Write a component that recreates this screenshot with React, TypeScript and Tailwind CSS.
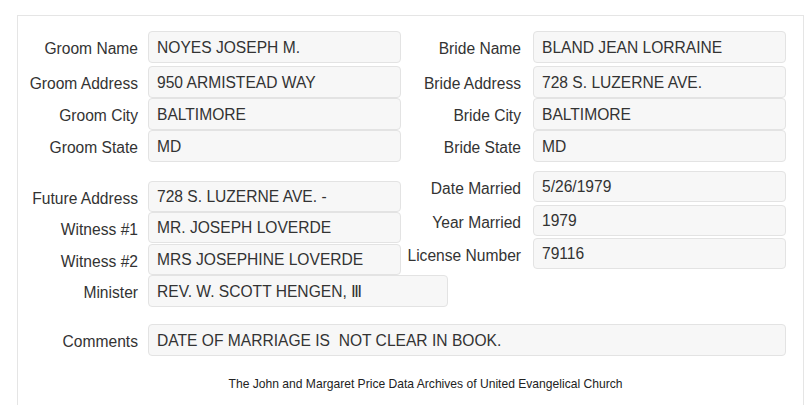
import React from "react";

type FieldProps = {
  label: string;
  value: string;
  cls: string;
  gapCls: string;
  inputW: string;
};

function Field({ label, value, cls, gapCls, inputW }: FieldProps) {
  return (
    <div className={`flex items-center ${cls}`}>
      <div className="w-[120px] shrink-0 text-right whitespace-nowrap text-[15.6px] leading-[18px] text-[#333] pt-[4px] flex justify-end">
        <span className="whitespace-nowrap">{label}</span>
      </div>
      <div
        className={`${gapCls} ${inputW} h-full shrink-0 rounded-[4px] border border-[#e3e3e3] bg-[#f7f7f7] pl-[8px] pt-[1px] flex items-center text-[15.6px] text-[#333] whitespace-pre`}
      >
        {value}
      </div>
    </div>
  );
}

export default function App() {
  return (
    <div
      className="w-[805px] h-[405px] overflow-hidden bg-white pt-[15px] pl-[17px]"
      style={{ fontFamily: '"Liberation Sans", Arial, sans-serif' }}
    >
      <div className="w-[787px] h-[420px] border border-[#e5e5e5]">
        {/* top section */}
        <div className="flex">
          <div className="flex flex-col w-[383px]">
            <Field label="Groom Name" value="NOYES JOSEPH M." cls="h-[32px] mt-[15px]" gapCls="ml-[10px]" inputW="w-[253px]" />
            <Field label="Groom Address" value="950 ARMISTEAD WAY" cls="h-[32px] mt-[3px]" gapCls="ml-[10px]" inputW="w-[253px]" />
            <Field label="Groom City" value="BALTIMORE" cls="h-[32px]" gapCls="ml-[10px]" inputW="w-[253px]" />
            <Field label="Groom State" value="MD" cls="h-[32px]" gapCls="ml-[10px]" inputW="w-[253px]" />
          </div>
          <div className="flex flex-col">
            <Field label="Bride Name" value="BLAND JEAN LORRAINE" cls="h-[32px] mt-[15px]" gapCls="ml-[12px]" inputW="w-[253px]" />
            <Field label="Bride Address" value="728 S. LUZERNE AVE." cls="h-[32px] mt-[3px]" gapCls="ml-[12px]" inputW="w-[253px]" />
            <Field label="Bride City" value="BALTIMORE" cls="h-[32px]" gapCls="ml-[12px]" inputW="w-[253px]" />
            <Field label="Bride State" value="MD" cls="h-[32px]" gapCls="ml-[12px]" inputW="w-[253px]" />
          </div>
        </div>

        {/* second section */}
        <div className="flex items-start">
          <div className="flex flex-col w-[383px]">
            <Field label="Future Address" value="728 S. LUZERNE AVE. -" cls="h-[31px] mt-[19px]" gapCls="ml-[10px]" inputW="w-[253px]" />
            <Field label="Witness #1" value="MR. JOSEPH LOVERDE" cls="h-[31px]" gapCls="ml-[10px]" inputW="w-[253px]" />
            <Field label="Witness #2" value="MRS JOSEPHINE LOVERDE" cls="h-[31px] mt-[1px]" gapCls="ml-[10px]" inputW="w-[253px]" />
            <Field label="Minister" value="REV. W. SCOTT HENGEN, Ⅲ" cls="h-[32px]" gapCls="ml-[10px]" inputW="w-[300px]" />
          </div>
          <div className="flex flex-col">
            <Field label="Date Married" value="5/26/1979" cls="h-[31px] mt-[9px]" gapCls="ml-[12px]" inputW="w-[253px]" />
            <Field label="Year Married" value="1979" cls="h-[31px] mt-[3px]" gapCls="ml-[12px]" inputW="w-[253px]" />
            <Field label="License Number" value="79116" cls="h-[31px] mt-[2px]" gapCls="ml-[12px]" inputW="w-[253px]" />
          </div>
        </div>

        <Field
          label="Comments"
          value="DATE OF MARRIAGE IS  NOT CLEAR IN BOOK."
          cls="h-[32px] mt-[17px]"
          gapCls="ml-[10px]"
          inputW="w-[638px]"
        />

        <div className="mt-[21px] pl-[30px] text-center text-[12.1px] leading-[14px] text-[#222]">
          The John and Margaret Price Data Archives of United Evangelical Church
        </div>
      </div>
    </div>
  );
}
